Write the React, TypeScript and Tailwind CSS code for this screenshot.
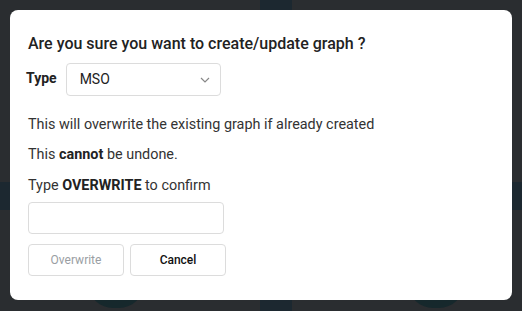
import React, { useState } from "react";

export default function App() {
  const [confirmText, setConfirmText] = useState("");
  const canOverwrite = confirmText === "OVERWRITE";

  return (
    <div
      className="relative h-[311px] w-[522px] overflow-hidden bg-[#2a2d30] p-[10px] pb-[11px]"
      style={{ fontFamily: "Roboto, 'Liberation Sans', sans-serif" }}
    >
      {/* page behind the overlay */}
      <div className="absolute left-[260px] top-0 h-full w-[32px] bg-[#1c2830]" />
      <div className="absolute left-0 top-[182px] h-[28px] w-full bg-[#1c2830]" />
      <div className="absolute left-[88px] top-[258px] h-[50px] w-[56px] rounded-full bg-[#16282c]" />
      <div className="absolute left-[408px] top-[258px] h-[50px] w-[56px] rounded-full bg-[#16282c]" />

      {/* Modal */}
      <div className="relative h-[290px] rounded-lg bg-white px-[18px] pt-[24px]">
        <h2 className="text-[16px] leading-[20px] font-medium text-[#222]">
          Are you sure you want to create/update graph ?
        </h2>

        <div className="mt-[9px] flex items-start gap-[9px]">
          <label className="-ml-[2px] mt-[5px] text-[14px] font-bold text-[#222]">Type</label>
          <div className="flex h-[33px] w-[155px] items-center justify-between rounded border border-[#dcdcdc] pl-[13px] pr-[10px]">
            <span className="text-[14px] text-[#222]">MSO</span>
            <svg width="10" height="6" viewBox="0 0 10 6" fill="none">
              <path d="M1 1l4 4 4-4" stroke="#888" strokeWidth="1.2" />
            </svg>
          </div>
        </div>

        <p className="mt-[20px] text-[14.4px] leading-[18px] text-[#333]">
          This will overwrite the existing graph if already created
        </p>
        <p className="mt-[12px] text-[14.4px] leading-[18px] text-[#333]">
          This <span className="font-bold text-[#222]">cannot</span> be undone.
        </p>
        <p className="mt-[13px] text-[14.4px] leading-[18px] text-[#333]">
          Type <span className="font-bold text-[#222]">OVERWRITE</span> to confirm
        </p>

        <input
          value={confirmText}
          onChange={(e) => setConfirmText(e.target.value)}
          className="mt-[7px] block h-[32px] w-[196px] rounded border border-[#dcdcdc] px-2 text-[14px] outline-none"
        />

        <div className="mt-[10px] flex gap-[6px]">
          <button
            type="button"
            disabled={!canOverwrite}
            className="h-[32px] w-[96px] rounded border border-[#dcdcdc] text-[12px] text-[#9a9ea3]"
          >
            Overwrite
          </button>
          <button
            type="button"
            className="h-[32px] w-[96px] rounded border border-[#dcdcdc] text-[12px] font-medium text-[#111]"
          >
            Cancel
          </button>
        </div>
      </div>
    </div>
  );
}
